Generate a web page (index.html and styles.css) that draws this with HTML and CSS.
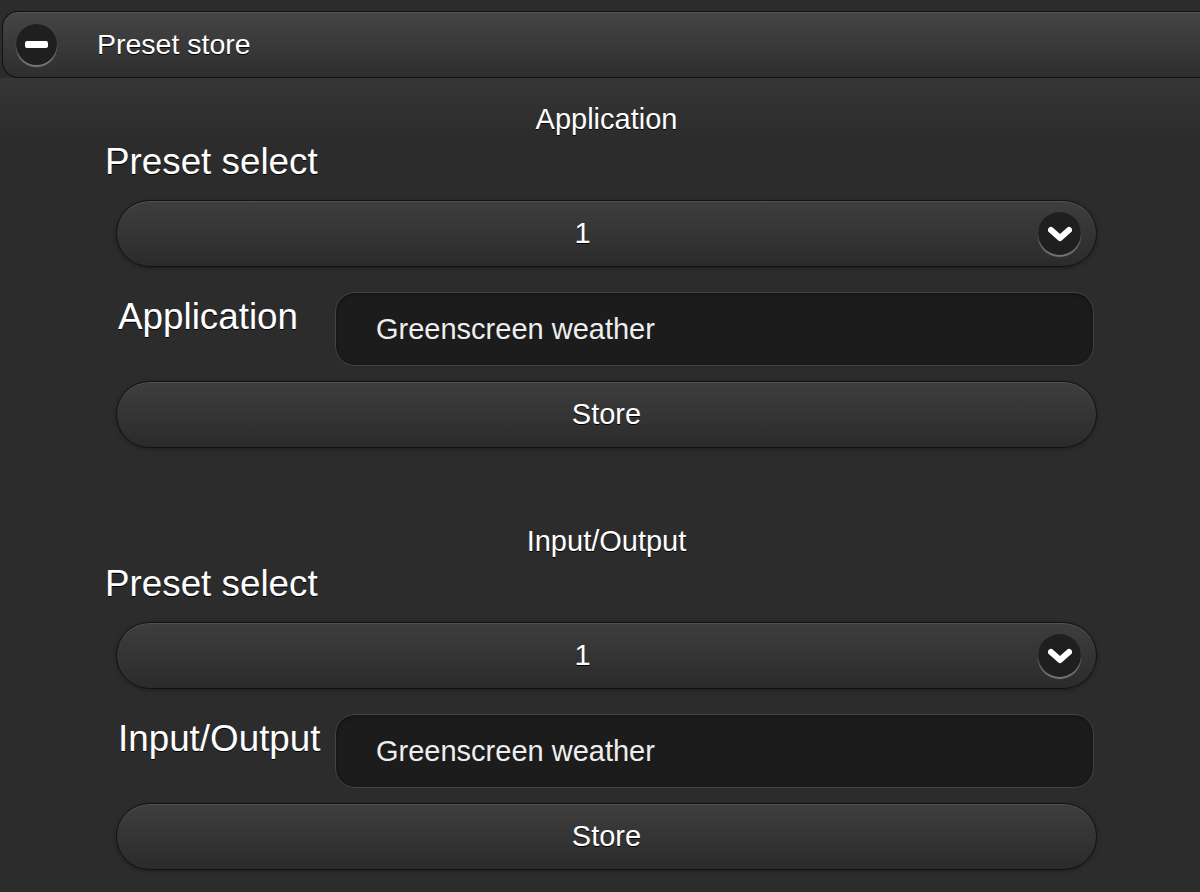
FILE: index.html
```html
<!DOCTYPE html>
<html lang="en">
<head>
    <meta charset="UTF-8">
    <meta name="viewport" content="width=device-width, initial-scale=1.0">
    <title>Preset store</title>
    <link rel="stylesheet" href="styles.css">
</head>
<body>
    <div class="collapsible">
        <div class="collapsible-heading">
            <span class="icon-circle icon-minus"><span class="minus-bar"></span></span>
            <span class="heading-text">Preset store</span>
        </div>

        <div class="collapsible-content">
            <div class="preset-section">
                <div class="section-title">Application</div>
                <div class="field-label">Preset select</div>
                <div class="select-btn">
                    <span class="select-value">1</span>
                    <span class="icon-circle icon-arrow">
                        <svg width="24" height="16" viewBox="0 0 24 16"><polyline points="3,4 12,12 21,4" fill="none" stroke="#fff" stroke-width="6" stroke-linecap="round" stroke-linejoin="round"/></svg>
                    </span>
                </div>
                <div class="name-row">
                    <label class="row-label">Application</label>
                    <div class="text-input">Greenscreen weather</div>
                </div>
                <div class="store-btn">Store</div>
            </div>

            <div class="preset-section">
                <div class="section-title">Input/Output</div>
                <div class="field-label">Preset select</div>
                <div class="select-btn">
                    <span class="select-value">1</span>
                    <span class="icon-circle icon-arrow">
                        <svg width="24" height="16" viewBox="0 0 24 16"><polyline points="3,4 12,12 21,4" fill="none" stroke="#fff" stroke-width="6" stroke-linecap="round" stroke-linejoin="round"/></svg>
                    </span>
                </div>
                <div class="name-row">
                    <label class="row-label">Input/Output</label>
                    <div class="text-input">Greenscreen weather</div>
                </div>
                <div class="store-btn">Store</div>
            </div>
        </div>
    </div>
</body>
</html>
```

FILE: styles.css
```css
html, body {
    margin: 0;
    padding: 0;
}
body {
    background-color: #2c2c2c;
    color: #fff;
    font-family: "Liberation Sans", Arial, sans-serif;
    overflow: hidden;
    height: 892px;
}

/* header of the collapsible */
.collapsible-heading {
    display: flex;
    align-items: center;
    height: 65px;
    margin: 11px -30px 0 2px;
    border: 1px solid #111;
    border-right: none;
    border-radius: 16px 0 0 16px;
    background: linear-gradient(#454545, #2e2e2e);
    box-shadow: inset 0 1px 0 rgba(255, 255, 255, 0.08);
}
.heading-text {
    font-size: 28.5px;
    margin-left: 40px;
    text-shadow: 0 1px 0 #000;
}

.icon-circle {
    display: flex;
    align-items: center;
    justify-content: center;
    border-radius: 50%;
    background-color: #1f1f1f;
    box-shadow: 0 2px 1px rgba(255, 255, 255, 0.35);
}
.icon-minus {
    width: 41px;
    height: 41px;
    margin-left: 13px;
}
.minus-bar {
    width: 23px;
    height: 7px;
    border-radius: 2px;
    background-color: #fff;
}

.collapsible-content {
    padding: 0 103px 0 116px;
    background: linear-gradient(#363636, #2c2c2c 60px);
}

.preset-section {
    display: flex;
    flex-direction: column;
    padding-top: 24px;
    padding-bottom: 52px;
}

.section-title {
    text-align: center;
    font-size: 29px;
    line-height: 36px;
    margin-top: -1px;
    margin-bottom: 1px;
    text-shadow: 0 1px 0 #000;
}
.field-label {
    font-size: 36.8px;
    line-height: 44px;
    margin: 2px 0 0 -11px;
    text-shadow: 0 1px 0 #000;
}

.select-btn, .store-btn {
    box-sizing: border-box;
    height: 67px;
    border: 1px solid #111;
    border-radius: 34px;
    background: linear-gradient(#3e3e3e, #2b2b2b);
    box-shadow: inset 0 1px 0 rgba(255, 255, 255, 0.1), 0 1px 4px rgba(0, 0, 0, 0.35);
    font-size: 29px;
    text-shadow: 0 1px 0 #000;
}
.select-btn {
    display: flex;
    align-items: center;
    margin-top: 16px;
    padding: 0 15px 0 40px;
}
.select-value {
    flex: 1;
    text-align: center;
    padding-right: 30px;
}
.icon-arrow {
    width: 43px;
    height: 43px;
}
.icon-arrow svg {
    display: block;
    margin-top: 1px;
}

.name-row {
    display: flex;
    align-items: flex-start;
    margin-top: 25px;
}
.row-label {
    width: 217px;
    padding: 3px 0 0 2px;
    font-size: 36.8px;
    line-height: 44px;
    white-space: nowrap;
    text-shadow: 0 1px 0 #000;
}
.text-input {
    flex: 1;
    box-sizing: border-box;
    height: 74px;
    margin-right: 3px;
    padding-left: 40px;
    display: flex;
    align-items: center;
    background-color: #1c1c1c;
    border: 1px solid #434343;
    border-radius: 20px;
    box-shadow: inset 0 1px 4px rgba(0, 0, 0, 0.4);
    font-size: 29px;
    color: #eee;
}

.store-btn {
    display: flex;
    align-items: center;
    justify-content: center;
    margin-top: 15px;
}
```
